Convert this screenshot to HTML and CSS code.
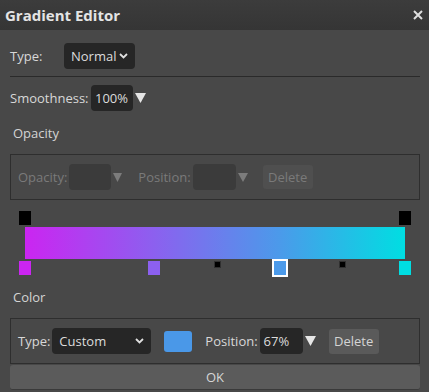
FILE: index.html
```html
<!DOCTYPE html>
<html lang="en">
<head>
    <meta charset="UTF-8">
    <title>Gradient Editor</title>
    <link rel="stylesheet" href="styles.css">
</head>
<body>
    <div class="dialog">
        <div class="titlebar">
            <span class="title">Gradient Editor</span>
            <svg class="close" width="10" height="10" viewBox="0 0 10 10"><path d="M1 1L9 9M9 1L1 9" stroke="#dedede" stroke-width="2"/></svg>
        </div>
        <div class="content">
            <div class="row type-row">
                <span class="label type-label">Type:</span>
                <div class="select normal-select">
                    <span>Normal</span>
                    <svg width="9" height="6" viewBox="0 0 9 6"><path d="M1 1L4.5 4.5L8 1" stroke="#e0e0e0" stroke-width="1.8" fill="none"/></svg>
                </div>
            </div>
            <div class="divider"></div>
            <div class="row">
                <span class="label smooth-label">Smoothness:</span>
                <div class="input smooth-input">100%</div>
                <svg class="tri" width="11" height="10" viewBox="0 0 11 10"><polygon points="0,0 11,0 5.5,10" fill="#e6e6e6"/></svg>
            </div>

            <div class="section-label opacity-title">Opacity</div>
            <div class="group disabled">
                <span class="label">Opacity:</span>
                <div class="input op-input"></div>
                <svg class="tri" width="9" height="10" viewBox="0 0 9 10"><polygon points="0,1 9,1 4.5,10" fill="#7c7c7c"/></svg>
                <span class="label pos-label">Position:</span>
                <div class="input op-pos"></div>
                <svg class="tri" width="10" height="10" viewBox="0 0 10 10"><polygon points="0,1 10,1 5,10" fill="#7c7c7c"/></svg>
                <div class="btn del-btn">Delete</div>
            </div>

            <div class="gradient">
                <div class="track top-track" id="opacityStops"></div>
                <div class="bar"></div>
                <div class="track bottom-track" id="colorStops"></div>
            </div>

            <div class="section-label color-title">Color</div>
            <div class="group">
                <span class="label">Type:</span>
                <div class="select custom-select">
                    <span>Custom</span>
                    <svg width="9" height="6" viewBox="0 0 9 6"><path d="M1 1L4.5 4.5L8 1" stroke="#e0e0e0" stroke-width="1.8" fill="none"/></svg>
                </div>
                <div class="swatch"></div>
                <span class="label color-pos-label">Position:</span>
                <div class="input color-pos">67%</div>
                <svg class="tri" width="11" height="10" viewBox="0 0 11 10"><polygon points="0,0 11,0 5.5,10" fill="#e6e6e6"/></svg>
                <div class="btn active-btn">Delete</div>
            </div>
            <div class="ok-btn">OK</div>
        </div>
    </div>
    <script>
        // stops of the gradient, positions in percent
        const opacityStops = [0, 100];
        const colorStops = [
            { pos: 0, color: '#cb25f1' },
            { pos: 34, color: '#8c60ef' },
            { pos: 67, color: '#4b9aea', selected: true },
            { pos: 100, color: '#00dee2' }
        ];
        const midpoints = [50.5, 83.5];

        const opacityTrack = document.getElementById('opacityStops');
        opacityStops.forEach(pos => {
            const stop = document.createElement('div');
            stop.className = 'stop';
            stop.style.left = 'calc(' + pos + '% - 6px)';
            stop.style.background = '#000';
            opacityTrack.appendChild(stop);
        });

        const colorTrack = document.getElementById('colorStops');
        colorStops.forEach(s => {
            const stop = document.createElement('div');
            stop.className = s.selected ? 'stop selected' : 'stop';
            stop.style.left = 'calc(' + s.pos + '% - ' + (s.selected ? 8 : 6) + 'px)';
            stop.style.background = s.color;
            colorTrack.appendChild(stop);
        });
        midpoints.forEach(pos => {
            const mid = document.createElement('div');
            mid.className = 'midpoint';
            mid.style.left = 'calc(' + pos + '% - 3px)';
            colorTrack.appendChild(mid);
        });
    </script>
</body>
</html>
```

FILE: styles.css
```css
body {
    margin: 0;
    background-color: #484848;
    font-family: "Open Sans", "DejaVu Sans", sans-serif;
    font-size: 13px;
    color: #d8d8d8;
}
.dialog {
    width: 429px;
    height: 392px;
    overflow: hidden;
}
.titlebar {
    height: 30px;
    display: flex;
    align-items: center;
    justify-content: space-between;
    padding: 0 6px 0 5px;
    background: linear-gradient(#3c3c3c, #353535);
}
.title {
    font-weight: 700;
    font-size: 15px;
    color: #e4e4e4;
}
.content {
    padding: 0 9px 0 10px;
}
.row {
    display: flex;
    align-items: center;
    height: 26px;
}
.type-row {
    margin-top: 13px;
}
.type-label {
    width: 54px;
}
.select {
    display: flex;
    align-items: center;
    justify-content: space-between;
    height: 26px;
    box-sizing: border-box;
    padding: 0 7px;
    background: #262626;
    border-radius: 4px;
    color: #dcdcdc;
}
.normal-select {
    width: 71px;
}
.divider {
    margin-top: 7px;
    border-top: 1px solid #2a2a2a;
}
.row + .row,
.divider + .row {
    margin-top: 8px;
}
.smooth-label {
    width: 81px;
}
.input {
    height: 26px;
    box-sizing: border-box;
    padding-left: 4px;
    line-height: 26px;
    background: #262626;
    border-radius: 4px;
    color: #dcdcdc;
}
.smooth-input {
    width: 42px;
}
.tri {
    margin-left: 2px;
}
.section-label {
    padding-left: 3px;
    line-height: 18px;
    margin-top: 13px;
    color: #d4d4d4;
}
.group {
    display: flex;
    align-items: center;
    margin-top: 12px;
    height: 44px;
    padding: 0 7px;
    border: 1px solid #2e2e2e;
}
.disabled .label {
    color: #7a7a7a;
}
.op-input {
    width: 42px;
    margin-left: 2px;
    background: #3b3b3b;
}
.pos-label {
    margin-left: 16px;
    margin-right: 2px;
}
.op-pos {
    width: 43px;
    background: #3b3b3b;
}
.btn {
    height: 24px;
    width: 50px;
    line-height: 24px;
    text-align: center;
    border-radius: 3px;
}
.del-btn {
    margin-left: 15px;
    background: #4f4f4f;
    color: #7a7a7a;
}
.gradient {
    margin: 11px 15px 0 15px;
    width: 380px;
}
.track {
    position: relative;
    height: 14px;
}
.bar {
    height: 32px;
    margin: 2px 0;
    background: linear-gradient(90deg, #cb25f1 0%, #8c60ef 34%, #4b9aea 67%, #00dee2 100%);
}
.stop {
    position: absolute;
    top: 0;
    width: 12px;
    height: 14px;
}
.stop.selected {
    top: -2px;
    border: 2px solid #ffffff;
}
.midpoint {
    position: absolute;
    top: 0;
    width: 5px;
    height: 5px;
    background: #000;
    border: 0.5px solid #303030;
}
.custom-select {
    width: 99px;
    margin-left: 2px;
}
.swatch {
    width: 28px;
    height: 21px;
    margin-left: 13px;
    background: #4a98e8;
    border-radius: 3px;
}
.color-pos-label {
    margin-left: 13px;
    margin-right: 2px;
}
.color-pos {
    width: 43px;
}
.active-btn {
    height: 25px;
    margin-left: 13px;
    background: #5a5a5a;
    color: #d4d4d4;
}
.ok-btn {
    margin-top: 1px;
    height: 24px;
    line-height: 24px;
    text-align: center;
    background: #5b5b5b;
    border-radius: 3px;
    border-bottom: 1px solid #3a3a3a;
    color: #d6d6d6;
}
```
